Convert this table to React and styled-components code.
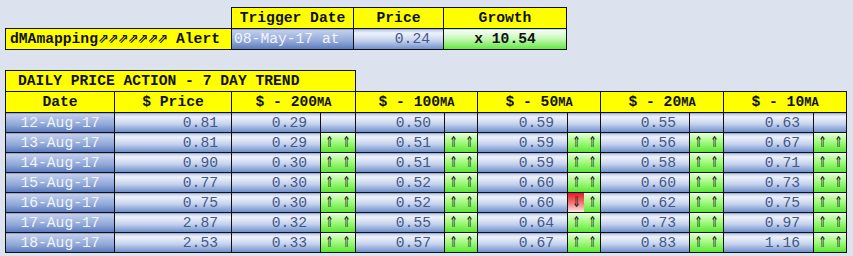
import React from "react";
import styled, { createGlobalStyle } from "styled-components";

const GlobalStyle = createGlobalStyle`
  html, body {
    margin: 0;
    padding: 0;
    background-color: #dde3ee;
  }
`;

const Page = styled.div`
  padding: 7px 0 0 5px;
  font-family: "Liberation Mono", "Courier New", monospace;
  font-size: 14.67px;
  display: flex;
  flex-direction: column;
  gap: 20px;
`;

const Table = styled.table`
  border-collapse: collapse;
  table-layout: fixed;
  width: ${(p) => p.$width}px;
`;

const Row = styled.tr`
  height: ${(p) => p.$h || 20}px;
`;

const Blank = styled.td`
  padding: 0;
  border: none;
`;

const Yellow = styled.td`
  background-color: #ffff00;
  border: 1px solid #111;
  font-weight: bold;
  color: #111;
  padding: 0 0 0 ${(p) => p.$indent || 0}px;
  text-align: ${(p) => (p.$left ? "left" : "center")};
  white-space: nowrap;
  line-height: 18px;
`;

const Small = styled.span`
  font-size: 12px;
`;

const Rockets = styled.span`
  font-family: "DejaVu Sans", sans-serif;
  font-size: 13px;
  letter-spacing: -1px;
`;

const blueGrad = `linear-gradient(to bottom, #b9c6e6 0%, #eef2fb 18%, #c6d3ee 55%, #6d8dca 100%)`;
const darkBlueGrad = `linear-gradient(to bottom, #c7cfea 0%, #b3c3e6 20%, #8ea7d8 60%, #5878bb 100%)`;

const Blue = styled.td`
  background: ${blueGrad};
  border: 1px solid #111;
  color: #445886;
  text-align: right;
  padding: 0 13px 0 0;
  white-space: nowrap;
  line-height: 18px;
`;

const DateCell = styled.td`
  background: ${darkBlueGrad};
  border: 1px solid #111;
  color: #f2f4fa;
  text-align: ${(p) => (p.$left ? "left" : "center")};
  padding: 0 0 0 ${(p) => (p.$left ? 2 : 0)}px;
  white-space: nowrap;
  line-height: 18px;
`;

const Growth = styled.td`
  background: linear-gradient(to bottom, #fbfffa 0%, #c9f7bb 45%, #5de83a 100%);
  border: 1px solid #111;
  font-weight: bold;
  color: #111;
  text-align: center;
  line-height: 18px;
`;

const ArrowCell = styled.td`
  border: 1px solid #111;
  padding: 0;
  background: ${(p) => (p.$empty ? blueGrad : "transparent")};
`;

const ArrowPair = styled.div`
  display: flex;
  height: 19px;
`;

const Arrow = styled.div`
  flex: 1;
  display: flex;
  align-items: center;
  justify-content: center;
  background: ${(p) =>
    p.$down
      ? "linear-gradient(to bottom, #e51b1b 0%, #f27070 50%, #fde7e7 100%)"
      : "linear-gradient(to bottom, #e6ffd9 0%, #a8fb86 45%, #5ae636 100%)"};
`;

const Glyph = styled.span`
  display: inline-block;
  font-family: "DejaVu Sans", sans-serif;
  font-size: 15px;
  line-height: 1;
  color: #1e1e1e;
  transform: scaleX(0.7);
`;

const rows = [
  ["12-Aug-17", "0.81", ["0.29", null], ["0.50", null], ["0.59", null], ["0.55", null], ["0.63", null]],
  ["13-Aug-17", "0.81", ["0.29", "uu"], ["0.51", "uu"], ["0.59", "uu"], ["0.56", "uu"], ["0.67", "uu"]],
  ["14-Aug-17", "0.90", ["0.30", "uu"], ["0.51", "uu"], ["0.59", "uu"], ["0.58", "uu"], ["0.71", "uu"]],
  ["15-Aug-17", "0.77", ["0.30", "uu"], ["0.52", "uu"], ["0.60", "uu"], ["0.60", "uu"], ["0.73", "uu"]],
  ["16-Aug-17", "0.75", ["0.30", "uu"], ["0.52", "uu"], ["0.60", "du"], ["0.62", "uu"], ["0.75", "uu"]],
  ["17-Aug-17", "2.87", ["0.32", "uu"], ["0.55", "uu"], ["0.64", "uu"], ["0.73", "uu"], ["0.97", "uu"]],
  ["18-Aug-17", "2.53", ["0.33", "uu"], ["0.57", "uu"], ["0.67", "uu"], ["0.83", "uu"], ["1.16", "uu"]],
];

const maCols = ["200", "100", "50", "20", "10"];
const colWidths = [109, 117, 89, 35, 89, 33, 90, 33, 89, 34, 90, 33];

const Trend = ({ code }) => {
  if (!code) return <ArrowCell $empty />;
  return (
    <ArrowCell>
      <ArrowPair>
        {code.split("").map((c, i) => (
          <Arrow key={i} $down={c === "d"}>
            <Glyph>{c === "d" ? "⇓" : "⇑"}</Glyph>
          </Arrow>
        ))}
      </ArrowPair>
    </ArrowCell>
  );
};

const App = () => {
  return (
    <>
      <GlobalStyle />
      <Page>
        <Table $width={561}>
          <colgroup>
            <col style={{ width: 226 }} />
            <col style={{ width: 122 }} />
            <col style={{ width: 90 }} />
            <col style={{ width: 123 }} />
          </colgroup>
          <tbody>
            <Row $h={21}>
              <Blank />
              <Yellow>Trigger Date</Yellow>
              <Yellow>Price</Yellow>
              <Yellow>Growth</Yellow>
            </Row>
            <Row $h={21}>
              <Yellow $left $indent={4}>
                dMAmapping<Rockets>⇗⇗⇗⇗⇗⇗⇗</Rockets> Alert
              </Yellow>
              <DateCell $left>08-May-17 at</DateCell>
              <Blue>0.24</Blue>
              <Growth>x 10.54</Growth>
            </Row>
          </tbody>
        </Table>

        <Table $width={841}>
          <colgroup>
            {colWidths.map((w, i) => (
              <col key={i} style={{ width: w }} />
            ))}
          </colgroup>
          <tbody>
            <Row $h={21}>
              <Yellow $left $indent={12} colSpan={4}>
                DAILY PRICE ACTION - 7 DAY TREND
              </Yellow>
              <Blank colSpan={8} />
            </Row>
            <Row $h={21}>
              <Yellow>Date</Yellow>
              <Yellow>$ Price</Yellow>
              {maCols.map((m) => (
                <Yellow key={m} colSpan={2}>
                  $ - {m}
                  <Small>MA</Small>
                </Yellow>
              ))}
            </Row>
            {rows.map(([date, price, ...mas]) => (
              <Row key={date} $h={20}>
                <DateCell>{date}</DateCell>
                <Blue>{price}</Blue>
                {mas.map(([v, code], i) => (
                  <React.Fragment key={i}>
                    <Blue>{v}</Blue>
                    <Trend code={code} />
                  </React.Fragment>
                ))}
              </Row>
            ))}
          </tbody>
        </Table>
      </Page>
    </>
  );
};

export default App;
